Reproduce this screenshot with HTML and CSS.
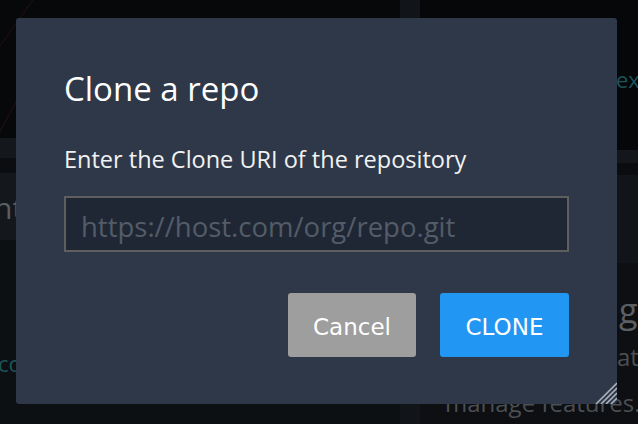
FILE: index.html
```html
<!DOCTYPE html>
<html>
<head>
<meta charset="utf-8">
<link rel="stylesheet" href="styles.css">
</head>
<body>
<div class="page">
  <div class="col-left">
    <div class="hero">
      <svg class="hero-lines" width="60" height="138" viewBox="0 0 60 138">
        <line x1="-10" y1="150" x2="60" y2="20" stroke="#2a1012" stroke-width="1"/>
        <line x1="-10" y1="60" x2="40" y2="-10" stroke="#26100f" stroke-width="1"/>
      </svg>
    </div>
    <div class="band"></div>
    <div class="band-dark"></div>
    <div class="card-head"><span class="bg-title">nt</span></div>
    <div class="card-body"><span class="bg-link">co</span></div>
  </div>
  <div class="divider"></div>
  <div class="col-right">
    <div class="hero-r"><span class="bg-link ex">ex</span></div>
    <div class="band-r"></div>
    <div class="band-dark-r"></div>
    <div class="card-head-r"></div>
    <div class="card-body-r">
      <span class="bg-title gr">gr</span>
      <span class="bg-text at">at</span>
      <span class="bg-text mf">manage features.</span>
    </div>
  </div>
</div>

<div class="modal">
  <h2 class="modal-title">Clone a repo</h2>
  <p class="modal-label">Enter the Clone URI of the repository</p>
  <input class="modal-input" type="text" placeholder="https://host.com/org/repo.git">
  <div class="modal-actions">
    <button class="btn btn-cancel">Cancel</button>
    <button class="btn btn-primary">CLONE</button>
  </div>
  <svg class="resize" width="22" height="22" viewBox="0 0 22 22">
    <line x1="1" y1="22" x2="22" y2="1" stroke="#aab1ba" stroke-width="1.6"/>
    <line x1="6" y1="22" x2="22" y2="6" stroke="#aab1ba" stroke-width="1.6"/>
    <line x1="11" y1="22" x2="22" y2="11" stroke="#aab1ba" stroke-width="1.6"/>
    <line x1="16" y1="22" x2="22" y2="16" stroke="#aab1ba" stroke-width="1.6"/>
  </svg>
</div>
</body>
</html>
```

FILE: styles.css
```css
html, body {
  margin: 0;
  padding: 0;
  width: 638px;
  height: 424px;
  overflow: hidden;
  background: #060708;
  font-family: "Open Sans", "Noto Sans", sans-serif;
}

.page {
  display: flex;
  width: 638px;
  height: 424px;
}

.col-left {
  width: 400px;
  display: flex;
  flex-direction: column;
  overflow: hidden;
}

.hero {
  height: 138px;
  background: #070809;
  overflow: hidden;
}

.hero-lines {
  display: block;
}

.band {
  height: 20px;
  background: #14181d;
}

.band-dark {
  height: 15px;
  background: #0b0d10;
}

.card-head {
  height: 67px;
  background: #14181c;
  display: flex;
  align-items: center;
}

.bg-title {
  font-size: 30px;
  color: #5b5f63;
  line-height: 1;
}

.card-head .bg-title {
  margin-left: -6px;
  margin-top: 2px;
}

.card-body {
  flex: 1;
  background: #0d1013;
  padding-top: 112px;
}

.bg-link {
  font-size: 22px;
  color: #1d5458;
  line-height: 1;
}

.card-body .bg-link {
  margin-left: -2px;
}

.divider {
  width: 20px;
  background: #111418;
}

.col-right {
  flex: 1;
  display: flex;
  flex-direction: column;
  overflow: hidden;
}

.hero-r {
  height: 150px;
  background: #060708;
  padding-top: 68px;
  box-sizing: border-box;
  padding-left: 196px;
}

.band-r {
  height: 13px;
  background: #13171c;
}

.band-dark-r {
  height: 12px;
  background: #0a0c0f;
}

.card-head-r {
  height: 88px;
  background: #111418;
}

.card-body-r {
  flex: 1;
  background: #0d0f12;
  display: flex;
  flex-direction: column;
  padding-left: 25px;
  padding-top: 30px;
}

.bg-text {
  font-size: 24px;
  color: #4b4f53;
  line-height: 1;
}

.gr {
  padding-left: 174px;
  font-size: 34px;
}

.at {
  padding-left: 172px;
  margin-top: 18px;
}

.mf {
  margin-top: 22px;
  white-space: nowrap;
}

/* Modal */
.modal {
  position: absolute;
  left: 16px;
  top: 18px;
  width: 601px;
  height: 386px;
  box-sizing: border-box;
  background: #2e3849;
  border-radius: 3px;
  padding: 49px 48px 47px 48px;
  display: flex;
  flex-direction: column;
}

.modal-title {
  margin: 0;
  font-weight: 400;
  font-size: 33px;
  line-height: 44px;
  color: #ffffff;
}

.modal-label {
  margin: 32px 0 0 0;
  font-size: 23.5px;
  line-height: 32px;
  color: #f2f2f2;
}

.modal-input {
  margin-top: 21px;
  box-sizing: border-box;
  width: 505px;
  height: 56px;
  background: #1f2734;
  border: 2px solid #5e5e5e;
  border-radius: 0;
  padding: 4px 14px 0 15px;
  font-family: "Open Sans", "Noto Sans", sans-serif;
  font-size: 27.5px;
  color: #e0e0e0;
  outline: none;
}

.modal-input::placeholder {
  color: #535c68;
  opacity: 1;
}

.modal-actions {
  margin-top: 41px;
  display: flex;
  justify-content: flex-end;
  gap: 24px;
}

.btn {
  height: 64px;
  border: none;
  border-radius: 3px;
  padding: 4px 25px 0 25px;
  font-family: "DejaVu Sans", sans-serif;
  font-size: 23px;
  color: #ffffff;
  cursor: pointer;
}

.btn-cancel {
  width: 128px;
  background: #9e9e9e;
}

.btn-primary {
  width: 129px;
  background: #2196f3;
}

.resize {
  position: absolute;
  right: 0;
  bottom: 0;
}
```
